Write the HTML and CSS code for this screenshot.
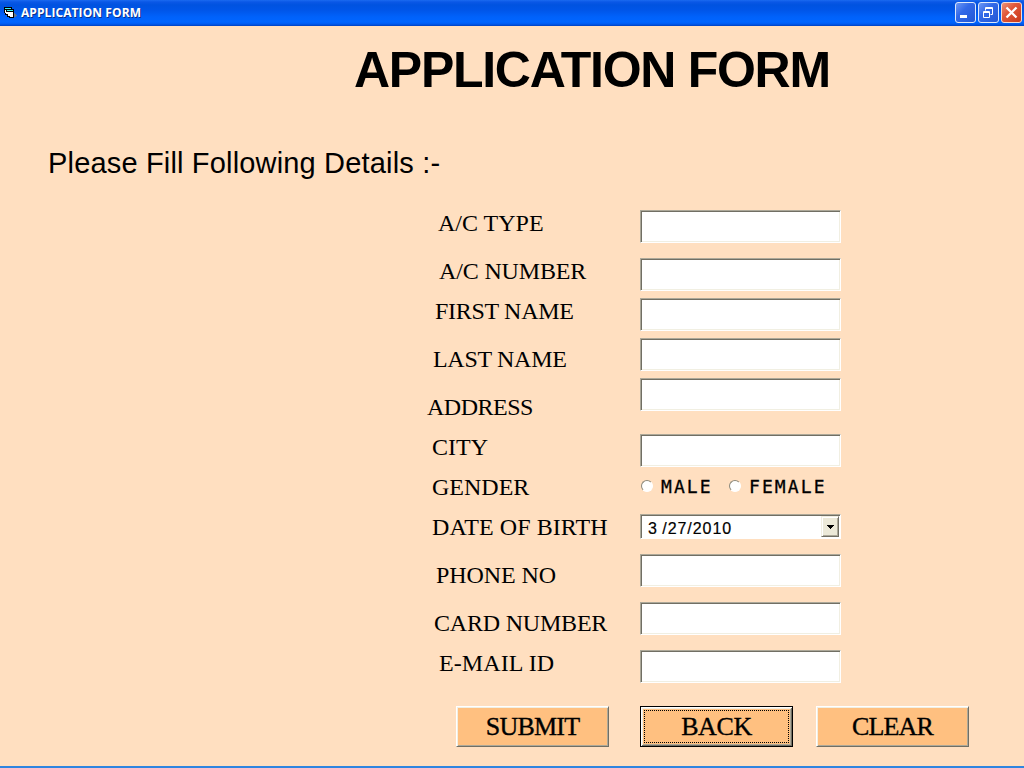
FILE: index.html
```html
<!DOCTYPE html>
<html lang="en">
<head>
<meta charset="utf-8">
<title>APPLICATION FORM</title>
<link rel="stylesheet" href="styles.css">
</head>
<body>
<div class="window">
  <header class="titlebar">
    <svg class="app-icon" width="14" height="12" viewBox="0 0 14 12" shape-rendering="crispEdges">
      <path d="M10 6h1v1h1v1h1v1h-1v1h-2z" fill="#64748c"/>
      <path d="M0 0h8v2h2v9H5v-1H3V8H1V6H0z" fill="#000"/>
      <path d="M1 1h6v1H1zM3 3h6v1H3z" fill="#3cf3f3"/>
      <path d="M1 3h1v3H1zM2 5h1v2H2zM3 5h6v5H6V9H4V7H3z" fill="#fff"/>
    </svg>
    <span class="caption">APPLICATION FORM</span>
    <div class="controls">
      <svg class="control" width="21" height="21" viewBox="0 0 21 21">
        <rect x=".5" y=".5" width="20" height="20" rx="2.5" fill="url(#blue)" stroke="#dce8fb"/>
        <path d="M5 13h7v3H5z" fill="#fff"/>
      </svg>
      <svg class="control" width="21" height="21" viewBox="0 0 21 21">
        <rect x=".5" y=".5" width="20" height="20" rx="2.5" fill="url(#blue)" stroke="#dce8fb"/>
        <path d="M7 8V5h7v7h-2M7 6h7M5 9h6v6H5zM5 10h6" transform="translate(.5 .5)" fill="none" stroke="#fff"/>
      </svg>
      <svg class="control" width="21" height="21" viewBox="0 0 21 21">
        <rect x=".5" y=".5" width="20" height="20" rx="2.5" fill="url(#red)" stroke="#f4dcd6"/>
        <path d="M5.5 5.5l10 10M15.5 5.5l-10 10" stroke="#fff" stroke-width="2.3"/>
      </svg>
    </div>
    <svg class="defs" width="0" height="0">
      <linearGradient id="blue" x2="1" y2="1"><stop stop-color="#719bf5"/><stop offset=".4" stop-color="#3369e8"/><stop offset="1" stop-color="#2156d4"/></linearGradient>
      <linearGradient id="red" x2="1" y2="1"><stop stop-color="#ee967c"/><stop offset=".4" stop-color="#e1583a"/><stop offset="1" stop-color="#c8391a"/></linearGradient>
    </svg>
  </header>
  <main class="form">
    <h1 class="title">APPLICATION FORM</h1>
    <p class="intro">Please Fill Following Details :-</p>
    <div class="details">
      <div class="labels">
        <label class="label type">A/C TYPE</label>
        <label class="label number">A/C NUMBER</label>
        <label class="label first">FIRST NAME</label>
        <label class="label last">LAST NAME</label>
        <label class="label address">ADDRESS</label>
        <label class="label city">CITY</label>
        <label class="label gender">GENDER</label>
        <label class="label birth">DATE OF BIRTH</label>
        <label class="label phone">PHONE NO</label>
        <label class="label card">CARD NUMBER</label>
        <label class="label email">E-MAIL ID</label>
      </div>
      <div class="fields">
        <input class="field">
        <input class="field gap-15">
        <input class="field gap-7">
        <input class="field gap-7">
        <input class="field gap-7">
        <input class="field gap-23">
        <div class="genders">
          <span class="radio"></span><span class="option male">MALE</span>
          <span class="radio"></span><span class="option">FEMALE</span>
        </div>
        <div class="date">
          <span class="date-value">3 /27/2010</span>
          <span class="drop"><svg width="7" height="4" viewBox="0 0 7 4" shape-rendering="crispEdges"><path d="M0 0h7v1H6v1H5v1H4v1H3V3H2V2H1V1H0z"/></svg></span>
        </div>
        <input class="field gap-15">
        <input class="field gap-15">
        <input class="field gap-15">
      </div>
    </div>
    <div class="actions">
      <button class="button submit"><span>SUBMIT</span></button>
      <button class="button back"><span class="focus">BACK</span></button>
      <button class="button clear"><span>CLEAR</span></button>
    </div>
  </main>
</div>
</body>
</html>
```
FILE: styles.css
```css
* { box-sizing: border-box; }
body { margin: 0; background: #ffdfc0; color: #000; }
.window {
  display: flex;
  flex-direction: column;
  width: 1024px;
  height: 768px;
  overflow: hidden;
  border-bottom: 2px solid #2f85e0;
}
.titlebar {
  display: flex;
  align-items: flex-start;
  flex: none;
  height: 26px;
  padding: 2px 2px 0 4px;
  background: linear-gradient(#1b6af0 0, #0a57e6 2px, #0053e0 5px, #0055e8 10px, #0062fb 17px, #0065ff 22px, #005bf0 24px, #0040c0 26px);
}
.app-icon { margin-top: 5px; }
.caption {
  margin: 3px 0 0 3px;
  font: bold 12px/16px "Open Sans", sans-serif;
  letter-spacing: .08px;
  white-space: nowrap;
  color: #fff;
  text-shadow: 1px 1px #0a318c;
}
.controls { display: flex; gap: 2px; margin-left: auto; }
.control { display: block; }
.defs { position: absolute; }
.form { flex: 1; }
.title {
  margin: 16px 0 0 354px;
  font: bold 50px/56px "Liberation Sans", Arial, sans-serif;
  letter-spacing: -1.28px;
  white-space: nowrap;
}
.intro {
  margin: 49px 0 0 48px;
  font: 29px/32px "Liberation Sans", Arial, sans-serif;
  letter-spacing: .17px;
  white-space: nowrap;
}
.details { display: flex; margin-top: 31px; }
.labels { display: flex; flex-direction: column; width: 640px; padding-top: 1px; }
.label {
  font: 24px/24px "Liberation Serif", "Times New Roman", serif;
  white-space: nowrap;
}
.type { margin-left: 438px; }
.number { margin: 24px 0 0 439px; letter-spacing: -.15px; }
.first { margin: 16px 0 0 435px; letter-spacing: -.3px; }
.last { margin: 24px 0 0 433px; letter-spacing: -.3px; }
.address { margin: 24px 0 0 427px; letter-spacing: -.5px; }
.city { margin: 16px 0 0 432px; }
.gender { margin: 16px 0 0 432px; }
.birth { margin: 16px 0 0 432px; letter-spacing: .08px; }
.phone { margin: 24px 0 0 436px; letter-spacing: -.1px; }
.card { margin: 24px 0 0 434px; letter-spacing: -.2px; }
.email { margin: 16px 0 0 439px; letter-spacing: .08px; }
.fields { display: flex; flex-direction: column; width: 201px; }
.field, .date {
  border: 1px solid;
  border-color: #aca899 #fff #fff #aca899;
  border-radius: 0;
  outline: 0;
  background: #fff;
}
.field {
  width: 201px;
  height: 33px;
  margin: 0;
  padding: 2px 4px;
  box-shadow: inset 1px 1px #716f64, inset -1px -1px #f1efe2;
}
.gap-7 { margin-top: 7px; }
.gap-15 { margin-top: 15px; }
.gap-23 { margin-top: 23px; }
.genders { display: flex; align-items: center; height: 24px; margin-top: 7px; }
.radio {
  width: 12px;
  height: 12px;
  margin-left: 1px;
  border: 1px solid;
  border-color: #8c887a #fff #fff #8c887a;
  border-radius: 50%;
  background: #fff;
}
.option {
  margin-left: 7px;
  padding: 1px 0 0 1px;
  font: 18px/24px "DejaVu Sans Mono", monospace;
  letter-spacing: 2.1px;
  -webkit-text-stroke: .3px #000;
}
.male { width: 68px; }
.date {
  display: flex;
  height: 25px;
  margin-top: 16px;
  padding: 1px;
  box-shadow: inset 1px 1px #716f64;
}
.date-value {
  flex: 1;
  padding-left: 6px;
  font: 16px/25px "Liberation Sans", Arial, sans-serif;
  letter-spacing: .95px;
  word-spacing: -1px;
  -webkit-text-stroke: .2px #000;
}
.drop {
  display: flex;
  align-items: center;
  justify-content: center;
  width: 18px;
  height: 21px;
  border: 1px solid;
  border-color: #f1efe2 #716f64 #716f64 #f1efe2;
  background: #ece9d8;
  box-shadow: inset 1px 1px #fff, inset -1px -1px #aca899;
}
.actions { display: flex; margin: 23px 0 0 456px; }
.button {
  width: 153px;
  height: 41px;
  padding: 0;
  border: 1px solid;
  border-color: #fff #716f64 #716f64 #fff;
  border-radius: 0;
  background: #ffc080;
  box-shadow: inset 1px 1px #f1efe2, inset -1px -1px #aca899;
  font: 26px/37px "Liberation Serif", "Times New Roman", serif;
  letter-spacing: -.8px;
  -webkit-text-stroke: .35px #000;
  color: #000;
}
.submit { letter-spacing: -.8px; }
.back {
  margin: 0 23px 0 31px;
  padding: 2px;
  border-color: #000;
  letter-spacing: -.4px;
  box-shadow: inset 1px 1px #fff, inset -1px -1px #716f64, inset 2px 2px #f1efe2, inset -2px -2px #aca899;
}
.focus { display: block; margin: 1px; height: 33px; border: 1px dotted #000; line-height: 31px; }
```
